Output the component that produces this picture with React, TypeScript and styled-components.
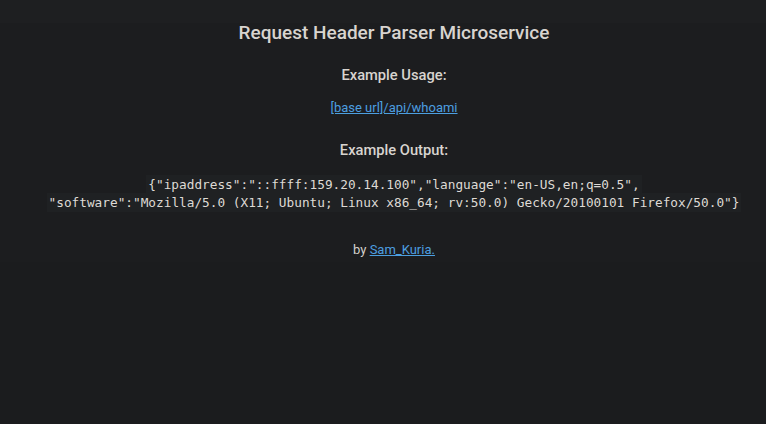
import React from "react";
import styled, { createGlobalStyle } from "styled-components";

const Global = createGlobalStyle`
  html, body { margin: 0; padding: 0; }
  body {
    background: #1b1c1e;
    color: #d5d1cc;
    font-family: Roboto, "Liberation Sans", sans-serif;
    text-align: center;
  }
`;

const TopBand = styled.div`
  height: 23px;
  background: #1e1f21;
`;

const Container = styled.main`
  display: flex;
  flex-direction: column;
  align-items: center;
  padding: 0 0 3px 22px;
  background: #1c1d1f;
`;

const Title = styled.h2`
  margin: 0;
  font-size: 19px;
  line-height: 20px;
  font-weight: 500;
  color: #d8d4cf;
`;

const Heading = styled.h3<{ $gap: number }>`
  margin: ${(p) => p.$gap}px 0 0;
  font-size: 14.7px;
  line-height: 20px;
  font-weight: 500;
  color: #d8d4cf;
`;

const Para = styled.p<{ $gap: number }>`
  margin: ${(p) => p.$gap}px 0 0;
  font-size: 13px;
  line-height: 18px;
  color: #d5d1cc;
`;

const Link = styled.a`
  color: #4c9fe0;
  text-decoration: underline;
`;

const Code = styled.code`
  font-family: "DejaVu Sans Mono", monospace;
  font-size: 12.75px;
  padding: 2px;
  background: #1f2123;
  color: #dedad5;
`;

export default function App() {
  return (
    <>
      <Global />
      <TopBand />
      <Container>
        <Title>Request Header Parser Microservice</Title>
        <Heading $gap={22}>Example Usage:</Heading>
        <Para $gap={14}>
          <Link href="#">[base url]/api/whoami</Link>
        </Para>
        <Heading $gap={23}>Example Output:</Heading>
        <Para $gap={16}>
          <Code>{'{"ipaddress":"::ffff:159.20.14.100","language":"en-US,en;q=0.5",'}</Code>
          <br />
          <Code>{'"software":"Mozilla/5.0 (X11; Ubuntu; Linux x86_64; rv:50.0) Gecko/20100101 Firefox/50.0"}'}</Code>
        </Para>
        <Para $gap={29}>
          by <Link href="#">Sam_Kuria.</Link>
        </Para>
      </Container>
    </>
  );
}
